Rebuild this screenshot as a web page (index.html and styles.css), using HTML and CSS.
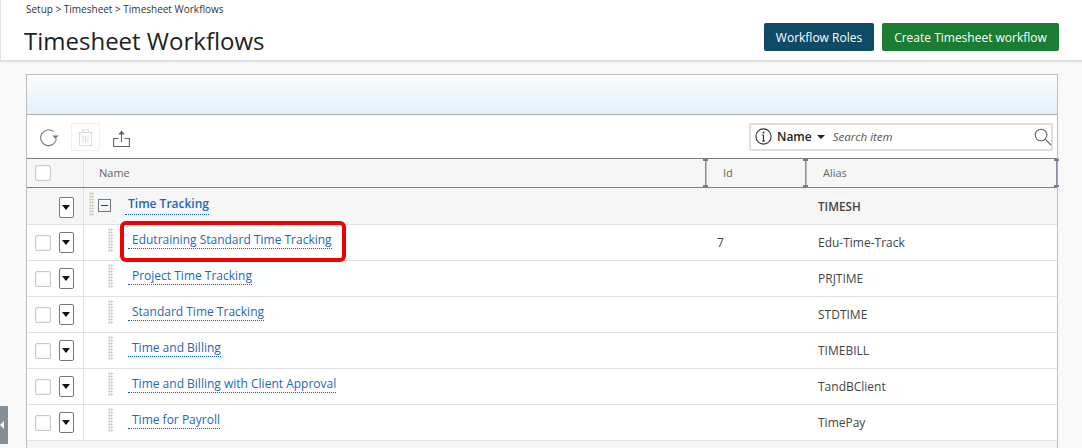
FILE: index.html
```html
<!DOCTYPE html>
<html lang="en">
<head>
<meta charset="utf-8">
<title>Timesheet Workflows</title>
<link rel="stylesheet" href="styles.css">
</head>
<body>
<header class="page-head">
  <div class="head-left">
    <div class="crumbs">Setup &gt; Timesheet &gt; Timesheet Workflows</div>
    <h1>Timesheet Workflows</h1>
  </div>
  <div class="head-actions">
    <button class="btn btn-navy">Workflow Roles</button>
    <button class="btn btn-green">Create Timesheet workflow</button>
  </div>
</header>
<main class="content">
  <section class="panel">
    <div class="band"></div>
    <div class="toolbar">
      <svg class="tool-refresh" width="19" height="18" viewBox="0 0 19 18" fill="none"><path d="M13.6 2.6A7.9 7.9 0 1 0 16.4 10" stroke="#6f7780" stroke-width="1.1"/><path d="M12.4 6.6h6.2l-3.1 3.4z" fill="#6f7780"/></svg>
      <span class="tool-delete">
        <svg width="15" height="17" viewBox="0 0 15 17" fill="none" stroke="#dcdcdc" stroke-width="1.1"><path d="M0 3.5h15M4.5 3.5V.8h6v2.7M1.5 3.5v13h12v-13M5 6.5v7M7.5 6.5v7M10 6.5v7"/></svg>
      </span>
      <svg class="tool-share" width="17" height="17" viewBox="0 0 17 17" fill="none" stroke="#5c6670" stroke-width="1.1"><path d="M5.5 8.5H.6v8h15.8v-8h-5M8.5 12V3"/><path d="M5.2 4.6 8.5.5l3.3 4.1z" fill="#5c6670" stroke="none"/></svg>
      <div class="search">
        <svg class="info" width="17" height="17" viewBox="0 0 17 17" fill="none"><circle cx="8.5" cy="8.5" r="7.6" stroke="#333" stroke-width="1.1"/><path d="M8.5 7v6M7 7h1.5M7 13h3" stroke="#333" stroke-width="1.2"/><circle cx="8.5" cy="4.6" r="1" fill="#333"/></svg>
        <span class="search-field">Name</span>
        <span class="caret"></span>
        <span class="search-hint">Search item</span>
        <svg class="lens" width="18" height="18" viewBox="0 0 18 18" fill="none" stroke="#5c6670" stroke-width="1.1"><circle cx="7" cy="7" r="5.8"/><path d="M11.2 11.2 17 17"/></svg>
      </div>
    </div>
    <div class="grid-head">
      <div class="cell-check"><span class="check"></span></div>
      <div class="col col-name">Name</div>
      <div class="col col-id handled">Id</div>
      <div class="col col-alias handled handled-end">Alias</div>
    </div>
    <div class="row row-group">
      <div class="cell-check"><span class="menu"></span></div>
      <div class="cell-name">
        <span class="grip grip-group"></span>
        <span class="collapse"></span>
        <a class="link link-group">Time Tracking</a>
      </div>
      <div class="cell-id"></div>
      <div class="cell-alias strong">TIMESH</div>
    </div>
    <div class="row">
      <div class="cell-check"><span class="check"></span><span class="menu"></span></div>
      <div class="cell-name"><span class="grip"></span><a class="link">Edutraining Standard Time Tracking</a></div>
      <div class="cell-id">7</div>
      <div class="cell-alias">Edu-Time-Track</div>
    </div>
    <div class="row">
      <div class="cell-check"><span class="check"></span><span class="menu"></span></div>
      <div class="cell-name"><span class="grip"></span><a class="link">Project Time Tracking</a></div>
      <div class="cell-id"></div>
      <div class="cell-alias">PRJTIME</div>
    </div>
    <div class="row">
      <div class="cell-check"><span class="check"></span><span class="menu"></span></div>
      <div class="cell-name"><span class="grip"></span><a class="link">Standard Time Tracking</a></div>
      <div class="cell-id"></div>
      <div class="cell-alias">STDTIME</div>
    </div>
    <div class="row">
      <div class="cell-check"><span class="check"></span><span class="menu"></span></div>
      <div class="cell-name"><span class="grip"></span><a class="link">Time and Billing</a></div>
      <div class="cell-id"></div>
      <div class="cell-alias">TIMEBILL</div>
    </div>
    <div class="row">
      <div class="cell-check"><span class="check"></span><span class="menu"></span></div>
      <div class="cell-name"><span class="grip"></span><a class="link">Time and Billing with Client Approval</a></div>
      <div class="cell-id"></div>
      <div class="cell-alias">TandBClient</div>
    </div>
    <div class="row">
      <div class="cell-check"><span class="check"></span><span class="menu"></span></div>
      <div class="cell-name"><span class="grip"></span><a class="link">Time for Payroll</a></div>
      <div class="cell-id"></div>
      <div class="cell-alias">TimePay</div>
    </div>
  </section>
</main>
<div class="highlight"></div>
<div class="side-tab"><span></span></div>
</body>
</html>
```
FILE: styles.css
```css
* { box-sizing: border-box; }
html, body { margin: 0; height: 100%; }
body {
  position: relative;
  height: 448px;
  overflow: hidden;
  background: #f8f8f8;
  color: #333;
  font-family: "Open Sans", sans-serif;
  font-size: 12px;
}
.page-head {
  display: flex;
  justify-content: space-between;
  height: 62px;
  padding: 0 23px 0 24px;
  background: #fff;
  border-left: 1px solid #e2e2e2;
  border-bottom: 2px solid #e0e0e0;
}
.crumbs {
  margin: 3px 0 0 1px;
  font-size: 10px;
  line-height: 13px;
  color: #333;
}
h1 {
  margin: 8px 0 0 -1px;
  font-size: 24px;
  line-height: 34px;
  font-weight: 400;
  color: #222;
}
.head-actions { display: flex; gap: 8px; padding-top: 23px; }
.btn {
  height: 28px;
  border: 0;
  border-radius: 2px;
  color: #fff;
  font-family: inherit;
  font-size: 12px;
  padding: 0;
}
.btn-navy { width: 110px; background: #0f4a66; }
.btn-green { width: 177px; background: #1b7d33; }
.content { padding: 12px 24px 0 26px; }
.panel {
  border: 1px solid #bdbdbd;
  border-bottom: 0;
  background: #f5f5f5;
  height: 374px;
}
.band {
  height: 39px;
  border-bottom: 1px solid #a9a9a9;
  background: linear-gradient(#fbfdfe, #e3f0f8);
  box-sizing: content-box;
}
.toolbar {
  display: flex;
  align-items: center;
  height: 43px;
  padding: 0 4px 0 13px;
  background: #fff;
}
.tool-refresh { margin-top: 3px; }
.tool-delete {
  display: flex;
  align-items: center;
  justify-content: center;
  width: 29px;
  height: 28px;
  margin: 1px 0 0 12px;
  border: 1px solid #f0f0f0;
  border-radius: 2px;
}
.tool-share { margin: 4px 0 0 13px; }
.search {
  display: flex;
  align-items: center;
  width: 304px;
  height: 28px;
  margin-left: auto;
  padding: 0 0 0 4px;
  border: 2px solid #dedede;
  border-radius: 2px;
  background: #fff;
}
.search-field { margin-left: 5px; font-size: 12px; font-weight: 600; color: #222; }
.caret {
  margin-left: 5px;
  border-left: 4px solid transparent;
  border-right: 4px solid transparent;
  border-top: 4px solid #222;
}
.search-hint { margin-left: 8px; font-size: 11.5px; font-style: italic; color: #555; }
.lens { margin: 0 -1px 0 auto; }
.grid-head, .row { display: grid; grid-template-columns: 56px 622px 100px 1fr; }
.grid-head {
  height: 30px;
  background: #f6f6f6;
  border-top: 1px solid #7d7d7d;
  border-bottom: 1px solid #7d7d7d;
  color: #666;
  font-size: 11px;
}
.col { display: flex; align-items: center; padding-left: 15px; padding-bottom: 1px; position: relative; }
.col-name { border-left: 1px solid #e0e0e0; }
.col-id { padding-left: 18px; }
.col-alias { padding-left: 18px; }
.handled::before, .handled-end::after {
  content: "";
  position: absolute;
  top: 0;
  bottom: 0;
  left: -2px;
  width: 5px;
  background:
    linear-gradient(#7d7d7d, #7d7d7d) top / 5px 2px no-repeat,
    linear-gradient(#7d7d7d, #7d7d7d) bottom / 5px 2px no-repeat,
    linear-gradient(#8b8ba6, #8b8ba6) center / 1.5px 100% no-repeat;
}
.handled-end::after { left: auto; right: -2px; }
.cell-check {
  display: flex;
  align-items: center;
  gap: 8px;
  padding-left: 8px;
}
.check {
  width: 16px;
  height: 16px;
  border: 1px solid #c9c9c9;
  border-radius: 2px;
  background: #fff;
  box-shadow: inset 0 0 2px #ddd;
}
.menu {
  position: relative;
  width: 15px;
  height: 21px;
  border: 1px solid #777;
  border-radius: 2px;
  background: #fff;
}
.menu::after {
  content: "";
  position: absolute;
  left: 2px;
  top: 7px;
  border-left: 4.5px solid transparent;
  border-right: 4.5px solid transparent;
  border-top: 5px solid #111;
}
.row {
  height: 36px;
  border-bottom: 1px solid #e2e2e2;
  background: #fff;
}
.row-group > .cell-check { padding-left: 32px; padding-top: 2px; }
.row-group { background: #f6f6f6; height: 37px; }
.cell-name {
  display: flex;
  align-items: center;
  padding-left: 24px;
  border-left: 1px solid #e2e2e2;
}
.grip {
  width: 5px;
  height: 24px;
  margin-top: -5px;
  background-image: radial-gradient(circle, #d5cfc3 1px, transparent 1.1px);
  background-size: 2.5px 3px;
}
.grip-group { margin-left: -19px; }
.collapse {
  position: relative;
  width: 13px;
  height: 13px;
  margin: -1px 0 0 4px;
  border: 1px solid #6c7a86;
}
.collapse::after {
  content: "";
  position: absolute;
  left: 2px;
  right: 2px;
  top: 5px;
  height: 1px;
  background: #444;
}
.link {
  margin: -3px 0 0 15px;
  padding: 0 0 1px 4px;
  color: #2467b8;
  border-bottom: 1px dotted #0b5fb8;
  font-size: 12px;
  line-height: 14px;
}
.link-group {
  margin: -2px 0 0 14px;
  padding: 0 0 2px 3px;
  font-weight: 600;
  line-height: 16px;
}
.cell-id { display: flex; align-items: center; padding-left: 12px; color: #444; font-size: 12px; }
.cell-alias { display: flex; align-items: center; padding-left: 13px; color: #444; font-size: 12px; }
.strong { font-weight: 600; font-size: 11.7px; }
.highlight {
  position: absolute;
  left: 120px;
  top: 221px;
  width: 226px;
  height: 41px;
  border: 4px solid #f00000;
  border-radius: 6px;
}
.side-tab {
  position: absolute;
  left: 0;
  top: 406px;
  width: 8px;
  height: 38px;
  background: #868e96;
  display: flex;
  align-items: center;
}
.side-tab span {
  border-top: 4px solid transparent;
  border-bottom: 4px solid transparent;
  border-right: 4px solid #fff;
}
```
